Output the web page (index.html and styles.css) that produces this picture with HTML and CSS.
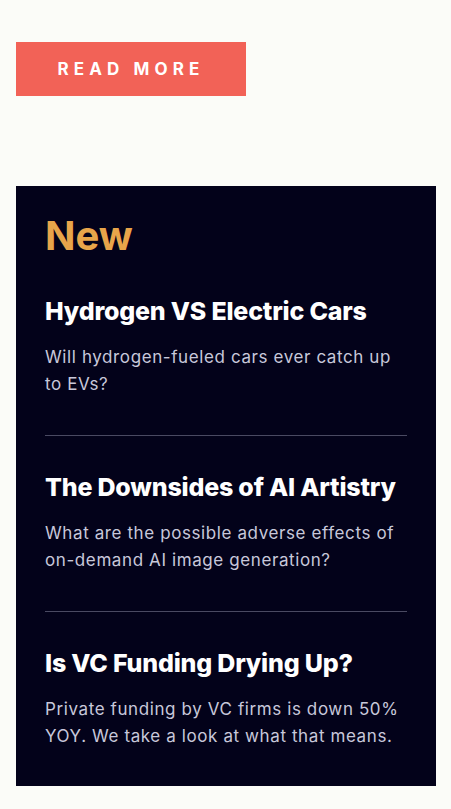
FILE: index.html
```html
<!DOCTYPE html>
<html lang="en">
<head>
<meta charset="utf-8">
<title>New</title>
<link rel="stylesheet" href="styles.css">
</head>
<body>
<main class="page">
  <a class="btn" href="#">READ MORE</a>
  <section class="panel">
    <h2 class="panel-title">New</h2>
    <article class="item">
      <h3 class="item-title">Hydrogen VS Electric Cars</h3>
      <p class="item-text">Will hydrogen-fueled cars ever catch up to EVs?</p>
    </article>
    <article class="item">
      <h3 class="item-title">The Downsides of AI Artistry</h3>
      <p class="item-text">What are the possible adverse effects of on-demand AI image generation?</p>
    </article>
    <article class="item">
      <h3 class="item-title">Is VC Funding Drying Up?</h3>
      <p class="item-text">Private funding by VC firms is down 50% YOY. We take a look at what that means.</p>
    </article>
  </section>
</main>
</body>
</html>
```

FILE: styles.css
```css
* { box-sizing: border-box; }
html, body { margin: 0; padding: 0; }
body {
  background: #fbfcf8;
  font-family: Inter, "Noto Sans", sans-serif;
  width: 451px;
}
.page {
  padding: 42px 15px 24px 16px;
  display: flex;
  flex-direction: column;
  align-items: flex-start;
}
.btn {
  display: flex;
  align-items: center;
  justify-content: center;
  width: 230px;
  height: 54px;
  background: #f26257;
  color: #fff;
  text-decoration: none;
  font-weight: 700;
  font-size: 17px;
  letter-spacing: 0.3em;
  padding-left: 0;
}
.panel {
  margin-top: 90px;
  width: 420px;
  background: #03021a;
  padding: 26px 29px 36px 29px;
  display: flex;
  flex-direction: column;
}
.panel-title {
  margin: 0;
  color: #e8a54a;
  font-size: 40px;
  line-height: 48px;
  font-weight: 700;
}
.item {
  padding: 35px 0 38px;
}
.item + .item {
  border-top: 1px solid #4a4a62;
  padding-top: 35px;
}
.item:last-child { padding-bottom: 0; }
.item-title {
  margin: 0;
  color: #fff;
  font-size: 25px;
  line-height: 32px;
  font-weight: 800;
  letter-spacing: -0.2px;
}
.item-text {
  margin: 17px 0 0;
  color: #c8c8da;
  font-size: 17px;
  line-height: 26.6px;
  letter-spacing: 0.6px;
}
```
